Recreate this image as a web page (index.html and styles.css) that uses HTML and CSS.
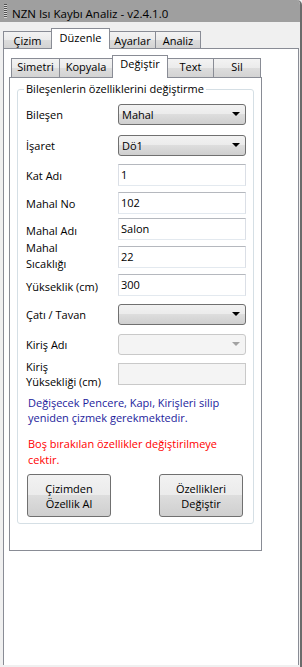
FILE: index.html
```html
<!DOCTYPE html>
<html lang="tr">
<head>
    <meta charset="UTF-8">
    <meta name="viewport" content="width=device-width, initial-scale=1.0">
    <title>NZN Isı Kaybı Analiz</title>
    <link rel="stylesheet" href="styles.css">
</head>
<body>
    <div class="window">
        <div class="titlebar">
            <span class="grip"></span>
            <span class="title">NZN Isı Kaybı Analiz - v2.4.1.0</span>
        </div>
        <div class="main">
            <div class="tabs outer-tabs">
                <div class="tab">Çizim</div>
                <div class="tab active">Düzenle</div>
                <div class="tab">Ayarlar</div>
                <div class="tab">Analiz</div>
            </div>
            <div class="page outer-page">
                <div class="tabs inner-tabs">
                    <div class="tab">Simetri</div>
                    <div class="tab">Kopyala</div>
                    <div class="tab active">Değiştir</div>
                    <div class="tab">Text</div>
                    <div class="tab">Sil</div>
                </div>
                <div class="page inner-page">
                    <fieldset class="group">
                        <legend>Bileşenlerin özelliklerini değiştirme</legend>
                        <div class="row">
                            <span class="lbl">Bileşen</span>
                            <div class="combo"><span>Mahal</span><span class="arrow"></span></div>
                        </div>
                        <div class="row mt9">
                            <span class="lbl">İşaret</span>
                            <div class="combo"><span>Dö1</span><span class="arrow"></span></div>
                        </div>
                        <div class="row mt8">
                            <span class="lbl">Kat Adı</span>
                            <div class="field">1</div>
                        </div>
                        <div class="row mt6">
                            <span class="lbl">Mahal No</span>
                            <div class="field">102</div>
                        </div>
                        <div class="row mt4">
                            <span class="lbl low">Mahal Adı</span>
                            <div class="field">Salon</div>
                        </div>
                        <div class="row mt6">
                            <span class="lbl two">Mahal<br>Sıcaklığı</span>
                            <div class="field">22</div>
                        </div>
                        <div class="row mt6">
                            <span class="lbl low">Yükseklik (cm)</span>
                            <div class="field">300</div>
                        </div>
                        <div class="row mt7">
                            <span class="lbl">Çatı / Tavan</span>
                            <div class="combo"><span></span><span class="arrow"></span></div>
                        </div>
                        <div class="row mt8">
                            <span class="lbl">Kiriş Adı</span>
                            <div class="combo disabled"><span></span><span class="arrow"></span></div>
                        </div>
                        <div class="row mt8">
                            <span class="lbl">Kiriş<br>Yüksekliği (cm)</span>
                            <div class="field disabled"></div>
                        </div>
                        <p class="note info">Değişecek Pencere, Kapı, Kirişleri silip yeniden çizmek gerekmektedir.</p>
                        <p class="note warn">Boş bırakılan özellikler değiştirilmeye cektir.</p>
                        <div class="buttons">
                            <div class="btn">Çizimden<br>Özellik Al</div>
                            <div class="btn">Özellikleri<br>Değiştir</div>
                        </div>
                    </fieldset>
                </div>
            </div>
        </div>
    </div>
</body>
</html>
```
FILE: styles.css
```css
body {
    margin: 0;
    font-family: 'Open Sans', 'Noto Sans', sans-serif;
    font-size: 11px;
    color: #000;
    background-color: #f0f0f0;
}
.window {
    width: 302px;
    height: 667px;
    box-sizing: border-box;
    border-right: 2px solid #6b6b6b;
    border-top-right-radius: 5px;
    overflow: hidden;
    display: flex;
    flex-direction: column;
    background-color: #f0f0f0;
}
.titlebar {
    flex: none;
    height: 22px;
    display: flex;
    align-items: center;
    padding-left: 4px;
    background-color: #9f9f9f;
}
.grip {
    width: 3px;
    height: 14px;
    margin-right: 5px;
    background: repeating-linear-gradient(#505050 0 1px, #d8d8d8 1px 2px);
}
.title {
    padding-top: 5px;
    font-size: 11.5px;
    line-height: 15px;
}
.main {
    flex: 1;
    min-height: 0;
    display: flex;
    flex-direction: column;
    padding: 6px 1px 2px 3px;
}

/* sekmeler */
.tabs {
    flex: none;
    display: flex;
    align-items: flex-end;
}
.tab {
    box-sizing: border-box;
    height: 17px;
    margin-left: -1px;
    padding-top: 2px;
    border: 1px solid #898c95;
    border-bottom: none;
    background: linear-gradient(#f3f3f3, #ebebeb 50%, #dddddd 50%, #d3d3d3);
    text-align: center;
    line-height: 14px;
}
.tab:first-child {
    margin-left: 0;
}
.tab.active {
    height: 21px;
    margin-bottom: -1px;
    position: relative;
    z-index: 1;
    background: #fff;
}
.outer-tabs {
    height: 20px;
}
.outer-tabs .tab:nth-child(1) { width: 49px; }
.outer-tabs .tab:nth-child(2) { width: 59px; }
.outer-tabs .tab:nth-child(3) { width: 47px; }
.outer-tabs .tab:nth-child(4) { width: 46px; }

.inner-tabs {
    height: 22px;
    padding-left: 2px;
}
.inner-tabs .tab {
    height: 19px;
    padding-top: 1px;
}
.inner-tabs .tab.active {
    height: 23px;
}
.inner-tabs .tab:nth-child(1) { width: 49px; }
.inner-tabs .tab:nth-child(2) { width: 54px; }
.inner-tabs .tab:nth-child(3) { width: 56px; }
.inner-tabs .tab:nth-child(4) { width: 47px; }
.inner-tabs .tab:nth-child(5) { width: 48px; }

.page {
    background-color: #fff;
    border: 1px solid #898c95;
}
.outer-page {
    flex: 1;
    border-bottom: none;
    padding: 6px 0 0 5px;
    display: flex;
    flex-direction: column;
    align-items: flex-start;
}
.inner-page {
    width: 253px;
    box-sizing: border-box;
    padding: 0 7px;
}

/* grup kutusu */
.group {
    margin: 3px 0 26px;
    padding: 6px 7px 6px 8px;
    border: 1px solid #d5dfe5;
    border-radius: 3px;
    min-width: 0;
}
.group legend {
    padding: 0 2px;
    margin-left: -2px;
    line-height: 16px;
}
.row {
    display: flex;
    align-items: center;
    height: 22px;
}
.mt4 { margin-top: 4px; }
.mt6 { margin-top: 6px; }
.mt7 { margin-top: 7px; }
.mt8 { margin-top: 8px; }
.mt9 { margin-top: 9px; }
.lbl {
    flex: none;
    width: 92px;
    line-height: 15px;
}
.lbl.low {
    padding-top: 3px;
}
.lbl.two {
    line-height: 16px;
    padding-bottom: 3px;
}
.combo, .field {
    box-sizing: border-box;
    width: 128px;
}
.combo {
    height: 21px;
    display: flex;
    align-items: center;
    justify-content: space-between;
    padding: 0 5px 0 3px;
    border: 1px solid #707070;
    border-radius: 3px;
    background: linear-gradient(#f2f2f2, #ebebeb 50%, #dddddd 50%, #cfcfcf);
}
.arrow {
    width: 0;
    height: 0;
    border-left: 4px solid transparent;
    border-right: 4px solid transparent;
    border-top: 4px solid #000;
}
.combo.disabled {
    border-color: #c9c9c9;
    background: #f4f4f4;
}
.combo.disabled .arrow {
    border-top-color: #a2a2a2;
}
.field {
    height: 22px;
    padding-left: 2px;
    border: 1px solid;
    border-color: #b5b8be #dbdfe6 #e3e9ef #dbdfe6;
    background-color: #fff;
    line-height: 20px;
}
.field.disabled {
    border-color: #c9c9c9;
    background-color: #f4f4f4;
}
.note {
    margin: 10px 0 0 2px;
    line-height: 15px;
}
.note.info {
    color: #1c1c9c;
}
.note.warn {
    margin-top: 11px;
    line-height: 16px;
    color: #ff0000;
}
.buttons {
    display: flex;
    justify-content: space-between;
    margin-top: 6px;
    padding: 0 3px 0 1px;
}
.btn {
    box-sizing: border-box;
    width: 84px;
    height: 43px;
    display: flex;
    align-items: center;
    justify-content: center;
    border: 1px solid #707070;
    border-radius: 3px;
    background: linear-gradient(#f2f2f2, #ebebeb 50%, #dddddd 50%, #cfcfcf);
    text-align: center;
    line-height: 15px;
}
```
